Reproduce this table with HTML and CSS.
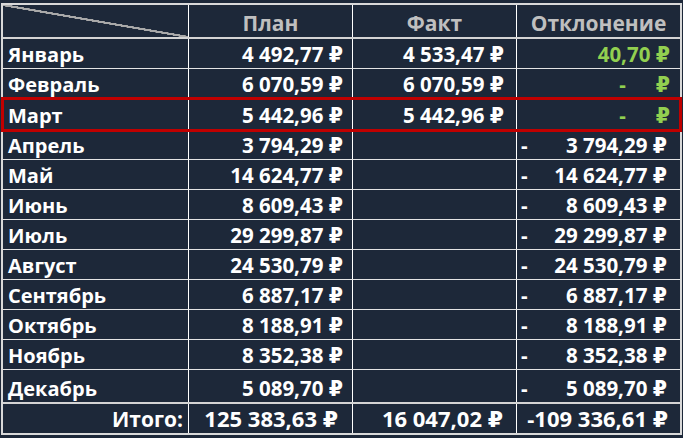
FILE: index.html
```html
<!DOCTYPE html>
<html lang="ru">
<head>
<meta charset="utf-8">
<link rel="stylesheet" href="styles.css">
</head>
<body>
<div class="sheet">
  <div class="row head">
    <div class="cell corner"></div>
    <div class="cell title">План</div>
    <div class="cell title">Факт</div>
    <div class="cell title">Отклонение</div>
  </div>
  <div class="row">
    <div class="cell name">Январь</div>
    <div class="cell num plan">4 492,77 ₽</div>
    <div class="cell num fact">4 533,47 ₽</div>
    <div class="cell dev green"><span></span><span>40,70 ₽</span></div>
  </div>
  <div class="row">
    <div class="cell name">Февраль</div>
    <div class="cell num plan">6 070,59 ₽</div>
    <div class="cell num fact">6 070,59 ₽</div>
    <div class="cell dev green zero"><span class="zdash">-</span><span>₽</span></div>
  </div>
  <div class="row marked">
    <div class="cell name">Март</div>
    <div class="cell num plan">5 442,96 ₽</div>
    <div class="cell num fact">5 442,96 ₽</div>
    <div class="cell dev green zero"><span class="zdash">-</span><span>₽</span></div>
  </div>
  <div class="row">
    <div class="cell name">Апрель</div>
    <div class="cell num plan">3 794,29 ₽</div>
    <div class="cell num fact"></div>
    <div class="cell dev"><span>-</span><span>3 794,29 ₽</span></div>
  </div>
  <div class="row">
    <div class="cell name">Май</div>
    <div class="cell num plan">14 624,77 ₽</div>
    <div class="cell num fact"></div>
    <div class="cell dev"><span>-</span><span>14 624,77 ₽</span></div>
  </div>
  <div class="row">
    <div class="cell name">Июнь</div>
    <div class="cell num plan">8 609,43 ₽</div>
    <div class="cell num fact"></div>
    <div class="cell dev"><span>-</span><span>8 609,43 ₽</span></div>
  </div>
  <div class="row">
    <div class="cell name">Июль</div>
    <div class="cell num plan">29 299,87 ₽</div>
    <div class="cell num fact"></div>
    <div class="cell dev"><span>-</span><span>29 299,87 ₽</span></div>
  </div>
  <div class="row">
    <div class="cell name">Август</div>
    <div class="cell num plan">24 530,79 ₽</div>
    <div class="cell num fact"></div>
    <div class="cell dev"><span>-</span><span>24 530,79 ₽</span></div>
  </div>
  <div class="row">
    <div class="cell name">Сентябрь</div>
    <div class="cell num plan">6 887,17 ₽</div>
    <div class="cell num fact"></div>
    <div class="cell dev"><span>-</span><span>6 887,17 ₽</span></div>
  </div>
  <div class="row">
    <div class="cell name">Октябрь</div>
    <div class="cell num plan">8 188,91 ₽</div>
    <div class="cell num fact"></div>
    <div class="cell dev"><span>-</span><span>8 188,91 ₽</span></div>
  </div>
  <div class="row">
    <div class="cell name">Ноябрь</div>
    <div class="cell num plan">8 352,38 ₽</div>
    <div class="cell num fact"></div>
    <div class="cell dev"><span>-</span><span>8 352,38 ₽</span></div>
  </div>
  <div class="row last">
    <div class="cell name">Декабрь</div>
    <div class="cell num plan">5 089,70 ₽</div>
    <div class="cell num fact"></div>
    <div class="cell dev"><span>-</span><span>5 089,70 ₽</span></div>
  </div>
  <div class="row total">
    <div class="cell label">Итого:</div>
    <div class="cell num tplan">125 383,63 ₽</div>
    <div class="cell num tfact">16 047,02 ₽</div>
    <div class="cell num tdev">-109 336,61 ₽</div>
  </div>
</div>
</body>
</html>
```

FILE: styles.css
```css
html, body {
  margin: 0;
  padding: 0;
  background: #1d2839;
}
body {
  width: 683px;
  height: 438px;
  overflow: hidden;
  font-family: "Open Sans", "DejaVu Sans", sans-serif;
  font-weight: 700;
  font-size: 20px;
  color: #ffffff;
}
.sheet {
  margin: 3px 0 0 1px;
  width: 677px;
  border: 2px solid #d9d9d9;
}
.row {
  display: grid;
  grid-template-columns: 186px 164px 164px 163px;
  height: 30px;
  box-sizing: border-box;
  border-bottom: 1px solid #e4e4e4;
}
.row.head {
  height: 34px;
  border-bottom: 2px solid #d4d4d4;
}
.row.last {
  border-bottom: none;
  height: 32px;
}
.row.total {
  height: 31px;
  border-top: 2px solid #d4d4d4;
  border-bottom: none;
}
.row.marked {
  height: 31px;
  outline: 3px solid #c00000;
  outline-offset: -1px;
  position: relative;
}
.cell {
  display: flex;
  align-items: flex-end;
  white-space: nowrap;
  line-height: 27px;
  border-right: 1px solid #ffffff;
  box-sizing: border-box;
  min-width: 0;
}
.cell:last-child {
  border-right: none;
}
.corner {
  background: linear-gradient(to top right, transparent calc(50% - 1.2px), #a9a9a9 calc(50% - 1px), #a9a9a9 calc(50% + 1px), transparent calc(50% + 1.2px));
}
.title {
  justify-content: center;
  color: #bfbfbf;
  font-size: 21px;
}
.name {
  padding-left: 5px;
}
.label {
  justify-content: flex-end;
  padding-right: 5px;
  font-size: 21px;
}
.num {
  justify-content: flex-end;
  font-size: 20.5px;
}
.total .num {
  font-size: 22px;
  line-height: 29px;
}
.plan { padding-right: 9px; }
.fact { padding-right: 12px; }
.tplan { padding-right: 14px; }
.tfact { padding-right: 13px; }
.tdev { padding-right: 12px; }
.dev {
  justify-content: space-between;
  padding: 0 13px 0 4px;
  font-size: 20.5px;
}
.dev.green {
  color: #92d050;
  padding-right: 10px;
}
.dev.zero {
  justify-content: flex-end;
}
.zdash {
  margin-right: 30px;
}
```
